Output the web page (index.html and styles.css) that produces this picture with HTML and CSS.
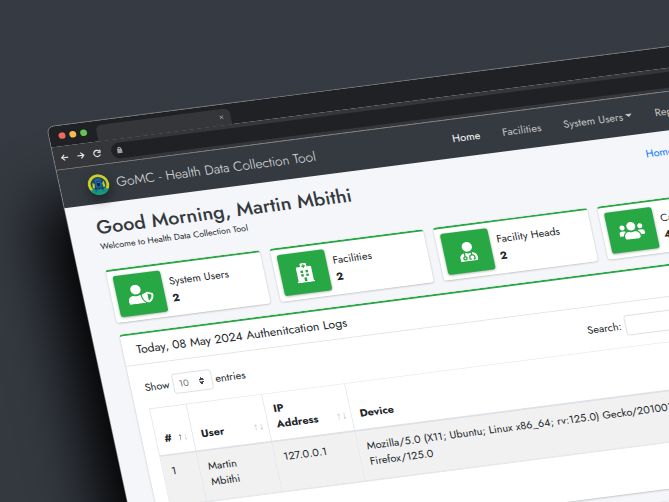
FILE: index.html
```html
<!DOCTYPE html>
<html lang="en">
<head>
<meta charset="utf-8">
<meta name="viewport" content="width=device-width, initial-scale=1">
<title>GoMC - Health Data Collection Tool</title>
<link rel="stylesheet" href="styles.css">
</head>
<body>
<div class="stage">
  <div class="window">
    <div class="tabstrip">
      <span class="light light-close"></span>
      <span class="light light-min"></span>
      <span class="light light-max"></span>
      <div class="tab">
        <svg class="tab-close" viewBox="0 0 8 8"><path d="M1 1l6 6M7 1L1 7"/></svg>
      </div>
    </div>
    <div class="toolbar">
      <svg class="tool" viewBox="0 0 16 16"><path d="M14 8H3M8 3L3 8l5 5"/></svg>
      <svg class="tool" viewBox="0 0 16 16"><path d="M2 8h11M8 3l5 5-5 5"/></svg>
      <svg class="tool" viewBox="0 0 16 16"><path d="M13 10.500A5.500 5.500 0 1 1 12 4.300M13.500 2v4.500H9"/></svg>
      <div class="address">
        <svg class="lock" viewBox="0 0 10 12"><path class="lock-body" d="M1 4h8v7H1z"/><path class="lock-bow" d="M3 5V3a2 2 0 0 1 4 0v2"/></svg>
      </div>
    </div>

    <header class="navbar">
      <a class="brand" href="#">
        <svg class="logo" viewBox="0 0 33 33">
          <circle cx="16.500" cy="16.500" r="16" fill="#53703f"/>
          <circle cx="16.500" cy="16.500" r="13.500" fill="#1d4b52" stroke="#d3cb2c" stroke-width="4"/>
          <path d="M3 25q13-7 27 0-4 8-13.500 8Q7 33 3 25z" fill="#169875"/>
          <path d="M8 13l3 2-1 7-3-1zM25 12l-3 3 1 7 3-2z" fill="#a5d13b"/>
          <path d="M12 9q4.500-4 9 0v12h-9z" fill="#1b62ae"/>
          <path d="M14.500 11h4v8h-4zM10 22h13v2H10z" fill="#14233f"/>
          <path d="M10 28l5-6M23 28l-5-6" stroke="#1b62ae" stroke-width="2"/>
          <path d="M15.500 12h2v2h-2z" fill="#4db3e6"/>
        </svg>
        <span>GoMC - Health Data Collection Tool</span>
      </a>
      <nav class="links">
        <a class="active" href="#">Home</a>
        <a href="#">Facilities</a>
        <a class="dropdown" href="#">System Users</a>
        <a href="#">Reports</a>
      </nav>
    </header>

    <main class="content">
      <div class="heading">
        <div>
          <h1>Good Morning, Martin Mbithi</h1>
          <p class="welcome">Welcome to Health Data Collection Tool</p>
        </div>
        <a class="crumb" href="#">Home</a>
      </div>

      <section class="stats">
        <div class="stat">
          <div class="stat-icon"><svg viewBox="0 0 640 512"><path d="M622.300 271.100l-115.200-45c-4.100-1.600-12.600-3.700-22.200 0l-115.200 45c-10.700 4.200-17.700 14-17.700 24.900 0 111.600 68.700 188.800 132.900 213.900 9.600 3.700 18 1.600 22.200 0C558.400 489.900 640 420.500 640 296c0-10.900-7-20.700-17.700-24.900zM496 462.400V273.300l95.500 37.300c-5.600 87.100-60.900 135.400-95.500 151.800zM224 256c70.700 0 128-57.300 128-128S294.700 0 224 0 96 57.300 96 128s57.300 128 128 128zm96 40c0-2.500.8-4.800 1.100-7.200-2.500-.1-4.900-.8-7.500-.8h-16.700c-22.200 10.200-46.900 16-72.900 16s-50.600-5.800-72.900-16h-16.700C60.200 288 0 348.200 0 422.400V464c0 26.500 21.500 48 48 48h352c6.800 0 13.300-1.500 19.200-4-54-42.900-99.200-116.700-99.200-212z"/></svg></div>
          <div class="stat-text"><span>System Users</span><strong>2</strong></div>
        </div>
        <div class="stat">
          <div class="stat-icon"><svg viewBox="0 0 448 512"><path d="M448 492v20H0v-20c0-6.600 5.400-12 12-12h20V120c0-13.300 10.700-24 24-24h88V24c0-13.300 10.700-24 24-24h112c13.300 0 24 10.700 24 24v72h88c13.300 0 24 10.700 24 24v360h20c6.600 0 12 5.400 12 12zM308 192h-40c-6.600 0-12 5.400-12 12v40c0 6.600 5.400 12 12 12h40c6.600 0 12-5.400 12-12v-40c0-6.600-5.400-12-12-12zm-168 64h40c6.600 0 12-5.400 12-12v-40c0-6.600-5.400-12-12-12h-40c-6.600 0-12 5.400-12 12v40c0 6.600 5.400 12 12 12zm104 128h-40c-6.600 0-12 5.400-12 12v84h64v-84c0-6.600-5.400-12-12-12zm64-96h-40c-6.600 0-12 5.400-12 12v40c0 6.600 5.400 12 12 12h40c6.600 0 12-5.400 12-12v-40c0-6.600-5.400-12-12-12zm-116 12c0-6.600-5.400-12-12-12h-40c-6.600 0-12 5.400-12 12v40c0 6.600 5.400 12 12 12h40c6.600 0 12-5.400 12-12v-40zM182 96h26v26a6 6 0 0 0 6 6h20a6 6 0 0 0 6-6V96h26a6 6 0 0 0 6-6V70a6 6 0 0 0-6-6h-26V38a6 6 0 0 0-6-6h-20a6 6 0 0 0-6 6v26h-26a6 6 0 0 0-6 6v20a6 6 0 0 0 6 6z"/></svg></div>
          <div class="stat-text"><span>Facilities</span><strong>2</strong></div>
        </div>
        <div class="stat">
          <div class="stat-icon"><svg viewBox="0 0 448 512"><path d="M224 256c70.700 0 128-57.300 128-128S294.700 0 224 0 96 57.300 96 128s57.300 128 128 128zM104 424c0 13.300 10.700 24 24 24s24-10.700 24-24-10.700-24-24-24-24 10.700-24 24zm216-135.400v49c36.500 7.400 64 39.800 64 78.400v41.700c0 7.600-5.400 14.200-12.900 15.700l-32.200 6.400c-4.300.9-8.500-1.900-9.400-6.300l-3.100-15.700c-.9-4.300 1.900-8.600 6.300-9.400l19.300-3.900V416c0-62.800-96-65.100-96 1.900v26.700l19.300 3.900c4.300.9 7.100 5.100 6.300 9.400l-3.100 15.700c-.9 4.300-5.100 7.100-9.400 6.300l-31.200-4.200c-7.900-1.100-13.800-7.800-13.800-15.900V416c0-38.600 27.500-70.900 64-78.400v-45.200c-2.200.7-4.400 1.100-6.600 1.900-18 6.300-37.300 9.800-57.400 9.800s-39.400-3.500-57.400-9.800c-7.400-2.600-14.900-4.200-22.600-5.200v81.600c23.100 6.900 40 28.100 40 53.400 0 30.900-25.100 56-56 56s-56-25.100-56-56c0-25.300 16.900-46.500 40-53.400v-80.400C48.500 301 0 355.800 0 422.400v44.800C0 491.900 20.100 512 44.800 512h358.400c24.700 0 44.800-20.100 44.800-44.800v-44.800c0-72-56.800-130.300-128-133.800z"/></svg></div>
          <div class="stat-text"><span>Facility Heads</span><strong>2</strong></div>
        </div>
        <div class="stat">
          <div class="stat-icon"><svg viewBox="0 0 640 512"><path d="M96 224c35.300 0 64-28.700 64-64s-28.700-64-64-64-64 28.700-64 64 28.700 64 64 64zm448 0c35.300 0 64-28.700 64-64s-28.700-64-64-64-64 28.700-64 64 28.700 64 64 64zm32 32h-64c-17.600 0-33.500 7.100-45.100 18.600 40.300 22.100 68.900 62 75.100 109.400h66c17.700 0 32-14.300 32-32v-32c0-35.300-28.700-64-64-64zm-256 0c61.900 0 112-50.100 112-112S381.900 32 320 32 208 82.100 208 144s50.100 112 112 112zm76.800 32h-8.300c-20.800 10-43.900 16-68.500 16s-47.600-6-68.500-16h-8.300C179.600 288 128 339.600 128 403.200V432c0 26.500 21.500 48 48 48h288c26.500 0 48-21.500 48-48v-28.800c0-63.600-51.600-115.200-115.200-115.200zm-223.700-13.400C161.500 263.100 145.600 256 128 256H64c-35.300 0-64 28.700-64 64v32c0 17.700 14.300 32 32 32h65.900c6.300-47.400 34.900-87.300 75.200-109.400z"/></svg></div>
          <div class="stat-text"><span>Cases</span><strong>4</strong></div>
        </div>
      </section>

      <section class="card">
        <h2 class="card-title">Today, 08 May 2024 Authenitcation Logs</h2>
        <div class="card-body">
          <div class="controls">
            <label class="control">Show
              <select><option>10</option></select>
              entries</label>
            <label class="control">Search:
              <input type="search"></label>
          </div>
          <table>
            <colgroup><col class="c-num"><col class="c-user"><col class="c-ip"><col><col class="c-last"></colgroup>
            <thead>
              <tr>
                <th class="sort sorted">#</th>
                <th class="sort">User</th>
                <th class="sort">IP Address</th>
                <th>Device</th>
                <th></th>
              </tr>
            </thead>
            <tbody>
              <tr>
                <td>1</td>
                <td>Martin Mbithi</td>
                <td>127.0.0.1</td>
                <td>Mozilla/5.0 (X11; Ubuntu; Linux x86_64; rv:125.0) Gecko/20100101 Firefox/125.0</td>
                <td></td>
              </tr>
            </tbody>
          </table>
        </div>
      </section>
    </main>
    <footer class="footer"></footer>
  </div>
</div>
</body>
</html>
```
FILE: styles.css
```css
* { box-sizing: border-box; }

body {
  margin: 0;
  background: #363a42;
  color: #212529;
  font: 400 16px/24px Jost, Lato, "Liberation Sans", sans-serif;
}

a { color: inherit; text-decoration: none; }

.stage {
  height: 100vh;
  overflow: hidden;
  background: linear-gradient(#363a42, #343940);
}

/* The window lies on a tilted plane; everything in it is laid out flat. */
.window {
  width: 156vw;
  border-radius: 10px 10px 0 0;
  background: #f4f6f9;
  box-shadow: 0 0 0 1px #77787a, -38px 116px 90px 0 #000;
  transform: matrix(.675, -.0871, .1375, .64, 47, 127);
  transform-origin: 0 0;
}

/* Browser chrome */
.tabstrip {
  display: flex;
  align-items: center;
  gap: 6px;
  height: 32px;
  padding-left: 14px;
  border-radius: 10px 10px 0 0;
  background: #202124;
}

.light { width: 10px; height: 10px; border-radius: 50%; }
.light-close { background: #ee6a5f; }
.light-min { background: #f5bd4f; }
.light-max { background: #61c454; }

.tab {
  display: flex;
  align-items: center;
  justify-content: flex-end;
  align-self: flex-end;
  width: 198px;
  height: 25px;
  margin-left: 8px;
  padding-right: 10px;
  border-radius: 8px 8px 0 0;
  background: #35363a;
}

.tab-close { width: 7px; height: 7px; fill: none; stroke: #c4c5c8; }

.toolbar {
  display: flex;
  align-items: center;
  gap: 10px;
  height: 36px;
  padding: 0 12px 0 9px;
  border-bottom: 1px solid #a3a19c;
  background: #35363a;
}

.tool { width: 14px; height: 14px; fill: none; stroke: #e4e5e7; stroke-width: 2; }

.address {
  display: flex;
  flex: 1;
  align-items: center;
  height: 24px;
  margin-left: 4px;
  padding-left: 8px;
  border-radius: 12px;
  background: #202124;
}

.lock { width: 9px; height: 11px; }
.lock-body { fill: #9aa0a6; }
.lock-bow { fill: none; stroke: #9aa0a6; stroke-width: 2; }

/* Navigation */
.navbar {
  display: flex;
  align-items: center;
  height: 59px;
  padding: 0 40px;
  background: #343a40;
}

.brand {
  display: flex;
  flex: 1;
  align-items: center;
  gap: 10px;
  color: #e3e4e5;
  font-size: 20px;
  font-weight: 300;
  white-space: nowrap;
}

.logo {
  width: 33px;
  height: 33px;
  border-radius: 50%;
  box-shadow: 0 8px 16px rgba(0, 0, 0, .4);
}

.links { display: flex; gap: 33px; width: 423px; color: #c2c4c6; white-space: nowrap; }
.links .active { color: #fff; }

.dropdown::after {
  content: "";
  display: inline-block;
  margin-left: 4px;
  border: 5px solid transparent;
  border-top-color: currentColor;
  border-bottom: 0;
  vertical-align: 4px;
}

/* Page */
.content { padding: 18px 40px; }

.heading { display: flex; justify-content: space-between; margin-bottom: 26px; }

h1 { margin: 0; color: #343a40; font-size: 29px; font-weight: 500; line-height: 36px; }

.welcome { margin: 2px 0 0; font-size: 13px; line-height: 20px; }

.crumb { width: 149px; line-height: 28px; color: #007bff; }

.stats {
  display: grid;
  grid-template-columns: repeat(4, 1fr);
  gap: 15px;
  margin-bottom: 18px;
}

.stat, .card {
  border-top: 3px solid #28a745;
  border-radius: 4px;
  background: #fff;
  box-shadow: 0 1px 3px rgba(0, 0, 0, .25);
}

.stats { padding-right: 8px; }

.stat { display: flex; gap: 10px; padding: 8px; }

.stat-icon {
  display: flex;
  align-items: center;
  justify-content: center;
  width: 70px;
  height: 64px;
  border-radius: 4px;
  background: #28a745;
  box-shadow: 0 1px 4px rgba(0, 0, 0, .35);
}

.stat-icon svg { height: 30px; fill: #fff; }

.stat-text { display: flex; flex-direction: column; justify-content: center; line-height: 26px; }

.card-title {
  margin: 0;
  padding: 11px 20px;
  border-bottom: 1px solid #dfdfdf;
  font-size: 18px;
  font-weight: 400;
}

.card-body { padding: 20px 20px 70px; }

.controls { display: flex; justify-content: space-between; margin-bottom: 17px; }

.control { display: flex; align-items: center; gap: 5px; }

select, input {
  height: 31px;
  border: 1px solid #ced4da;
  border-radius: 4px;
  background-color: #fff;
  color: #6b7178;
  font: inherit;
}

/* The double arrow of the drop-down is four corner triangles. */
select {
  width: 58px;
  padding: 0 8px;
  appearance: none;
  background-image:
    linear-gradient(to bottom left, #343a40 50%, transparent 50%),
    linear-gradient(to bottom right, #343a40 50%, transparent 50%),
    linear-gradient(to top left, #343a40 50%, transparent 50%),
    linear-gradient(to top right, #343a40 50%, transparent 50%);
  background-position: 37px 16px, 41px 16px, 37px 9px, 41px 9px;
  background-repeat: no-repeat;
  background-size: 4px 5px;
  font-size: 14px;
}

input { width: 212px; padding: 0 8px; }

table {
  width: 100%;
  border: 1px solid #dee2e6;
  border-right: 0;
  border-collapse: separate;
  border-spacing: 0;
  table-layout: fixed;
}

.c-num { width: 54px; }
.c-user { width: 112px; }
.c-ip { width: 123px; }
.c-last { width: 134px; }

th, td {
  padding: 12px;
  border-right: 1px solid #dee2e6;
  border-bottom: 1px solid #dee2e6;
  text-align: left;
}

th {
  position: relative;
  border-bottom-width: 3px;
  font-weight: 700;
  vertical-align: bottom;
}

.sort { padding-right: 30px; }
.sort.sorted { padding-right: 12px; }

.sort::after {
  content: "↑↓";
  position: absolute;
  right: 6px;
  bottom: 12px;
  color: #bbbdc0;
  font: 400 16px/24px "Liberation Serif", serif;
}

.sorted::after {
  background: linear-gradient(90deg, #495057 50%, #c8cacd 50%);
  background-clip: text;
  color: transparent;
}

td {
  height: 77px;
  background: #f1f1f1;
  vertical-align: top;
}

.footer { height: 60px; border-top: 1px solid #dee2e6; background: #fff; }
```
